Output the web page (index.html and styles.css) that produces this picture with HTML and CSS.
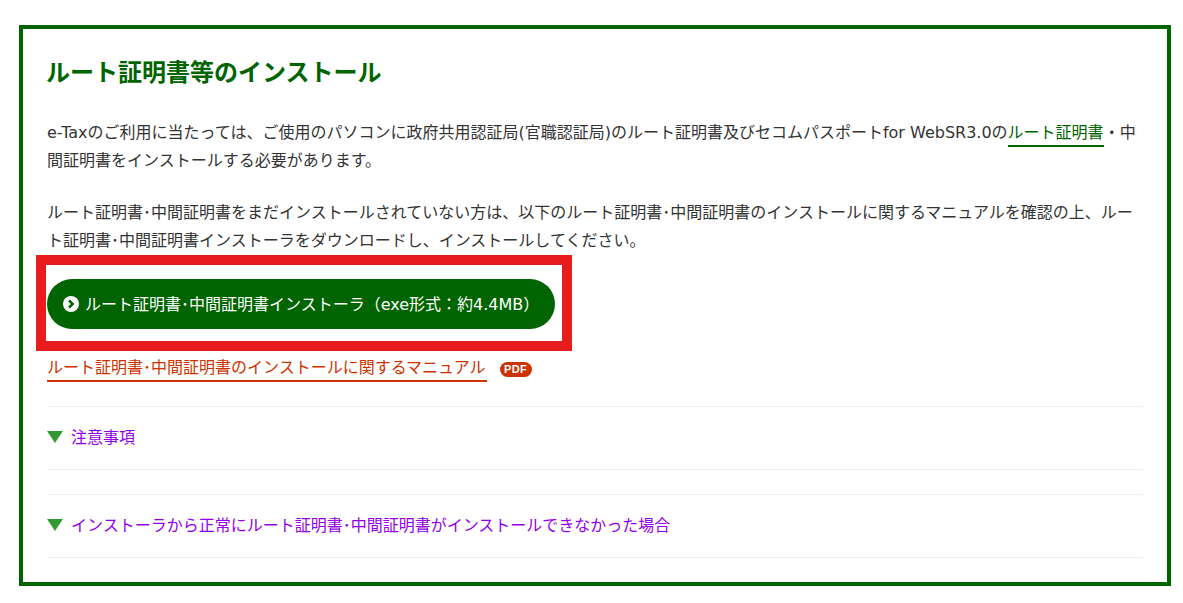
FILE: index.html
```html
<!DOCTYPE html>
<html lang="ja">
<head>
<meta charset="utf-8">
<title>ルート証明書等のインストール</title>
<link rel="stylesheet" href="styles.css">
</head>
<body>
<main class="panel">
  <h2 class="title">ルート証明書等のインストール</h2>
  <p class="text">e-Taxのご利用に当たっては、ご使用のパソコンに政府共用認証局(官職認証局)のルート証明書及びセコムパスポートfor WebSR3.0の<a class="link-green" href="#">ルート証明書</a>・中間証明書をインストールする必要があります。</p>
  <p class="text">ルート証明書･中間証明書をまだインストールされていない方は、以下のルート証明書･中間証明書のインストールに関するマニュアルを確認の上、ルート証明書･中間証明書インストーラをダウンロードし、インストールしてください。</p>
  <div class="button-row">
    <a class="button" href="#">
      <svg class="button-icon" viewBox="0 0 16 16" aria-hidden="true"><circle cx="8" cy="8" r="8" fill="#fff"/><path d="M6 4.4 9.6 8 6 11.6" fill="none" stroke="#006400" stroke-width="2.6"/></svg>
      ルート証明書･中間証明書インストーラ（exe形式：約4.4MB）
    </a>
    <span class="highlight"></span>
  </div>
  <p class="manual"><a class="link-red" href="#">ルート証明書･中間証明書のインストールに関するマニュアル</a><span class="pdf">PDF</span></p>
  <div class="toggle first"><span class="arrow"></span><a class="link-purple" href="#">注意事項</a></div>
  <div class="toggle"><span class="arrow"></span><a class="link-purple" href="#">インストーラから正常にルート証明書･中間証明書がインストールできなかった場合</a></div>
</main>
</body>
</html>
```
FILE: styles.css
```css
* { box-sizing: border-box; }
html, body { margin: 0; background: #fff; }
body {
  padding: 25px 12px 17px 19px;
  font-family: "DejaVu Sans", "Noto Sans CJK JP", sans-serif;
  color: #333;
  font-size: 16px;
}
.panel {
  height: 561px;
  border: 4px solid #006400;
  padding: 24px 24px 0;
}
.title {
  margin: 1px 0 0 -1px;
  height: 38px;
  font-size: 24px;
  line-height: 38px;
  font-weight: 700;
  color: #006400;
}
.text {
  margin: 27px 0 0;
  line-height: 28px;
}
.text + .text { margin-top: 24px; }
a { text-decoration: none; }
.link-green {
  color: #006400;
  border-bottom: 2px solid #006400;
  padding-bottom: 3px;
}
.button-row {
  position: relative;
  margin-top: 24px;
  width: 508px;
  height: 50px;
}
.button {
  display: flex;
  align-items: center;
  gap: 6px;
  height: 50px;
  padding: 0 0 2px 16px;
  border-radius: 25px;
  background: #006400;
  color: #fff;
}
.button-icon { width: 16px; height: 16px; flex: none; margin-top: 2px; }
.highlight {
  position: absolute;
  left: -11px;
  top: -24px;
  width: 536px;
  height: 96px;
  border: 10px solid #e81c1c;
  pointer-events: none;
}
.manual {
  margin: 24px 0 0;
  height: 28px;
  display: flex;
  align-items: center;
}
.link-red {
  padding: 4px 1px 0 0;
  line-height: 24px;
  color: #cc3300;
  border-bottom: 2px solid #cc3300;
}
.pdf {
  margin: 5px 0 0 13px;
  width: 32px;
  height: 15px;
  border-radius: 8px;
  background: #cc3300;
  color: #fff;
  font-family: "Liberation Sans", sans-serif;
  font-size: 11px;
  font-weight: 700;
  line-height: 15px;
  letter-spacing: 0.3px;
  text-align: center;
}
.toggle {
  display: flex;
  align-items: center;
  gap: 8px;
  height: 64px;
  border-top: 1px solid #eee;
  border-bottom: 1px solid #eee;
  margin-top: 24px;
}
.toggle.first { margin-top: 25px; }
.arrow {
  width: 0;
  height: 0;
  margin-bottom: 2px;
  border-left: 8px solid transparent;
  border-right: 8px solid transparent;
  border-top: 12px solid #339933;
}
.link-purple {
  padding-bottom: 4px;
  color: #9400e8;
}
```
